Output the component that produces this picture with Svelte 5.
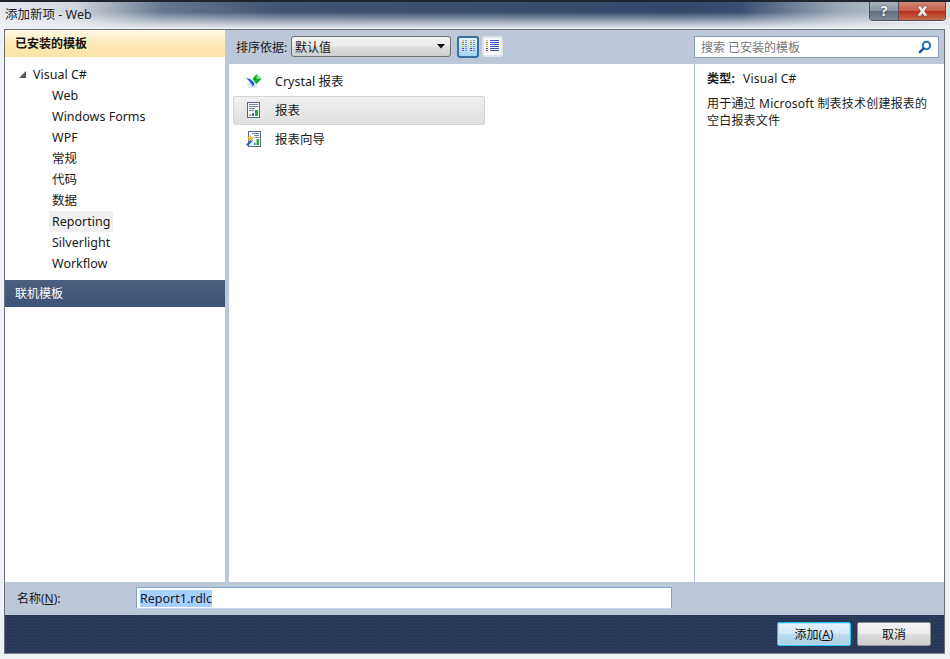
<script lang="ts">
  const groups = ["Web", "Windows Forms", "WPF", "常规", "代码", "数据", "Reporting", "Silverlight", "Workflow"];
  const templates = [
    { name: "Crystal 报表", icon: "crystal", selected: false },
    { name: "报表", icon: "report", selected: true },
    { name: "报表向导", icon: "wizard", selected: false }
  ];
  const dots = ["#d8c040", "#e04030", "#50b050", "#e8b020", "#3050c0", "#e04030"];
</script>

<div class="window">
  <div class="titlebar">
    <span class="title">添加新项 - Web</span>
    <div class="caption">
      <div class="cap-help">?</div>
      <div class="cap-close">
        <svg width="17" height="12" viewBox="0 0 17 12">
          <path d="M3 1h4l1.500 2.500L10 1h4l-3.500 5 3.500 5h-4L8.500 8.500 7 11H3l3.500-5z" fill="#f4f0ee" stroke="#7d3a30" stroke-width=".6" />
        </svg>
      </div>
    </div>
  </div>

  <div class="frame">
    <div class="panes">
      <aside class="left">
        <div class="installed">已安装的模板</div>
        <div class="tree">
          <div class="root">
            <svg width="9" height="9" viewBox="0 0 9 9"><path d="M8 1v7H1z" fill="#555" /></svg>
            <span>Visual C#</span>
          </div>
          {#each groups as g}
            <div class="node"><span class:current={g === "Reporting"}>{g}</span></div>
          {/each}
        </div>
        <div class="online">联机模板</div>
      </aside>

      <main class="center">
        <div class="toolbar">
          <span class="sort-label">排序依据:</span>
          <div class="select">
            <span>默认值</span>
            <svg width="8" height="5" viewBox="0 0 8 5"><path d="M0 0h8L4 4.500z" fill="#111" /></svg>
          </div>
          <div class="view-btn active">
            <svg width="15" height="15" viewBox="0 0 15 15">
              {#each dots as c, i}
                <rect x="1" y={1 + i * 2} width="2" height="1" fill={c} />
                <rect x="4" y={1 + i * 2} width="2" height="1" fill="#7c8ed8" />
                <rect x="9" y={1 + i * 2} width="2" height="1" fill={c} />
                <rect x="12" y={1 + i * 2} width="2" height="1" fill="#7c8ed8" />
              {/each}
            </svg>
          </div>
          <div class="view-btn">
            <svg width="15" height="15" viewBox="0 0 15 15">
              {#each dots as c, i}
                <rect x="1" y={1 + i * 2} width="2" height="1" fill={c} />
                <rect x="5" y={1 + i * 2} width="9" height="1" fill="#3f50c0" />
              {/each}
            </svg>
          </div>
        </div>
        <div class="list">
          {#each templates as t}
            <div class="item" class:selected={t.selected}>
              <span class="item-icon">
                {#if t.icon === "crystal"}
                  <svg width="16" height="16" viewBox="0 0 16 16">
                    <path d="M1 9l6 1.500L11 9v6H2z" fill="#dfe8f4" />
                    <path d="M0 5c3 .2 6 1.800 8.500 5L7 14C5.500 10.500 3 7.500 0 5z" fill="#1f5cc4" />
                    <path d="M10.500 1l5 5-5 5-4-5z" fill="#12a83a" />
                    <path d="M10.500 1l5 5h-5z" fill="#6fe07a" />
                  </svg>
                {:else if t.icon === "report"}
                  <svg width="16" height="16" viewBox="0 0 16 16">
                    <rect x="1.500" y=".5" width="12" height="15" fill="#f4f7fb" stroke="#56688a" />
                    <path d="M3 2.500h9M3 4.500h9M3 6.500h6M3 8.500h5" stroke="#7488a8" />
                    <path d="M3 14v-2h2v2z" fill="#f0a020" />
                    <path d="M6 14v-3h2v3z" fill="#2c6fd0" />
                    <path d="M9 14V8h3v6z" fill="#2fa83c" />
                  </svg>
                {:else}
                  <svg width="16" height="16" viewBox="0 0 16 16">
                    <rect x="2.500" y=".5" width="12" height="15" fill="#f4f7fb" stroke="#56688a" />
                    <path d="M6 2.500h7M8 4.500h5M9 6.500h4" stroke="#7488a8" />
                    <path d="M8 14v-2h1.500v2z" fill="#2c6fd0" />
                    <path d="M10.500 14V8h2.500v6z" fill="#2fa83c" />
                    <path d="M0 14l5-6 2 1.500L2 15z" fill="#2b62c4" />
                    <path d="M4 4l1.200 2L8 6.500 6 8l.4 2.500L4 9 2 10l.6-2.500L1 6l2-.2z" fill="#f2bc20" />
                  </svg>
                {/if}
              </span>
              <span>{t.name}</span>
            </div>
          {/each}
        </div>
      </main>

      <section class="right">
        <div class="search-wrap">
          <div class="search">
            <span>搜索 已安装的模板</span>
            <svg width="14" height="14" viewBox="0 0 14 14">
              <circle cx="8.500" cy="5.500" r="3.700" fill="none" stroke="#1e72b8" stroke-width="2" />
              <path d="M5.500 8.500L1.800 12.200" stroke="#1c4f94" stroke-width="2.400" stroke-linecap="round" />
            </svg>
          </div>
        </div>
        <div class="details">
          <div class="kind"><b>类型:</b><span>Visual C#</span></div>
          <p>用于通过 Microsoft 制表技术创建报表的<br />空白报表文件</p>
        </div>
      </section>
    </div>

    <div class="name-row">
      <label for="name">名称(<u>N</u>):</label>
      <div class="name-input" id="name"><span>Report1.rdlc</span></div>
    </div>

    <div class="actions">
      <button class="primary">添加(<u>A</u>)</button>
      <button>取消</button>
    </div>
  </div>
</div>

<style>
  :global(body) {
    margin: 0;
  }

  .window {
    width: 950px;
    height: 659px;
    box-sizing: border-box;
    overflow: hidden;
    padding: 0 5px 5px 4px;
    display: flex;
    flex-direction: column;
    font-family: "Noto Sans", "Noto Sans CJK SC", sans-serif;
    font-size: 12.5px;
    color: #1a1a1a;
    border-top: 2px solid #20242c;
    background:
      linear-gradient(180deg, rgba(240, 243, 247, 0) 0, rgba(240, 243, 247, 0) 10px, #eef1f5 27px),
      linear-gradient(90deg, #e8eaee 0, #d0d5dc 8%, #66788f 17%, #40536f 30%, #34496a 72%, #3a4f70 78%, #9aa6b4 88%, #d8dde4 100%);
  }

  .titlebar {
    height: 27px;
    flex: none;
    display: flex;
    justify-content: space-between;
    align-items: flex-start;
  }

  .title {
    margin: 4px 0 0 1px;
    font-size: 12.5px;
    line-height: 18px;
    color: #1f1f28;
  }

  .caption {
    display: flex;
    margin-right: -1px;
    height: 18px;
    border: 1px solid #4a4f58;
    border-top: none;
    border-radius: 0 0 4px 4px;
    overflow: hidden;
    box-shadow: 0 1px 0 rgba(255, 255, 255, .6);
  }

  .cap-help {
    width: 28px;
    text-align: center;
    font-weight: 700;
    font-size: 14px;
    line-height: 17px;
    color: #f2f2f2;
    text-shadow: 0 0 2px #333;
    border-right: 1px solid #555;
    background: linear-gradient(180deg, #a7b1bc 0, #8a96a4 48%, #626f80 52%, #7c8894 100%);
  }

  .cap-close {
    width: 46px;
    display: flex;
    align-items: center;
    justify-content: center;
    background: linear-gradient(180deg, #d08a78 0, #c85f48 48%, #b8301a 52%, #c86a50 100%);
  }

  .frame {
    flex: 1;
    min-height: 0;
    display: flex;
    flex-direction: column;
    border: 1px solid #6b7077;
    border-bottom-color: #7f838a;
    background: #bcc7d8;
  }

  .panes {
    flex: 1;
    min-height: 0;
    display: flex;
  }

  .left {
    width: 220px;
    flex: none;
    display: flex;
    flex-direction: column;
    background: #fff;
  }

  .installed {
    height: 27px;
    line-height: 27px;
    padding-left: 10px;
    font-weight: 700;
    font-size: 12px;
    color: #111;
    background: linear-gradient(180deg, #fff9e6 0, #fde8b4 55%, #fce4a8 100%);
  }

  .tree {
    padding-top: 7px;
    padding-bottom: 6px;
    line-height: 21px;
  }

  .root {
    display: flex;
    align-items: center;
    gap: 6px;
    padding-left: 13px;
    height: 21px;
  }

  .node {
    height: 21px;
    padding-left: 44px;
  }

  .node span {
    display: inline-block;
    padding: 0 3px;
  }

  .current {
    background: #f0f0f0;
  }

  .online {
    height: 27px;
    line-height: 27px;
    padding-left: 10px;
    font-size: 12px;
    color: #fff;
    background: linear-gradient(180deg, #4d5f80 0, #3d5278 100%);
  }

  .center {
    flex: none;
    width: 469px;
    display: flex;
    flex-direction: column;
  }

  .toolbar {
    height: 34px;
    flex: none;
    display: flex;
    align-items: center;
    padding-left: 11px;
    box-sizing: border-box;
    padding-bottom: 1px;
    margin-right: -1px;
  }

  .sort-label {
    font-size: 12px;
    width: 55px;
    flex: none;
  }

  .select {
    width: 160px;
    height: 21px;
    box-sizing: border-box;
    display: flex;
    align-items: center;
    justify-content: space-between;
    padding: 0 5px 0 3px;
    font-size: 12px;
    border: 1px solid #707070;
    border-radius: 3px;
    background: linear-gradient(180deg, #f2f2f2 0, #ebebeb 48%, #dddddd 52%, #cfcfcf 100%);
  }

  .view-btn {
    width: 21px;
    height: 21px;
    box-sizing: border-box;
    margin-left: 6px;
    display: flex;
    align-items: center;
    justify-content: center;
    border: 2px solid #dfe4ec;
    border-radius: 3px;
    background: #f8fafc;
  }

  .view-btn + .view-btn {
    margin-left: 3px;
  }

  .view-btn.active {
    width: 22px;
    height: 22px;
    border-color: #38709c;
    background: linear-gradient(180deg, #e8f4fc 0, #a0d4f2 100%);
  }

  .list {
    flex: 1;
    background: #fff;
    margin-left: 4px;
    padding-top: 3px;
  }

  .item {
    height: 29px;
    width: 252px;
    box-sizing: border-box;
    margin-left: 4px;
    display: flex;
    align-items: center;
    padding: 0 0 2px 12px;
    gap: 13px;
    border: 1px solid transparent;
    border-radius: 2px;
  }

  .item-icon {
    width: 16px;
    height: 16px;
    display: flex;
    flex: none;
  }

  .item.selected {
    border-color: #d4d4d4;
    background: linear-gradient(180deg, #f0f0f0 0, #e0e0e0 100%);
  }

  .right {
    flex: 1;
    display: flex;
    flex-direction: column;
  }

  .search-wrap {
    height: 34px;
    flex: none;
    padding-right: 5px;
    padding-left: 0;
    box-sizing: border-box;
    padding-top: 6px;
  }

  .search {
    height: 22px;
    box-sizing: border-box;
    display: flex;
    align-items: center;
    justify-content: space-between;
    padding: 0 6px;
    background: #fff;
    border: 1px solid #8a9bb4;
    color: #777;
    font-size: 12px;
  }

  .details {
    flex: 1;
    background: #fff;
    border-left: 1px solid #b4c4d8;
    padding: 5px 12px;
    font-size: 12px;
    letter-spacing: .2px;
  }

  .kind {
    display: flex;
    gap: 8px;
    line-height: 20px;
  }

  .details p {
    margin: 6px 0 0;
    line-height: 17px;
  }

  .name-row {
    height: 33px;
    flex: none;
    box-sizing: border-box;
    display: flex;
    align-items: center;
    padding: 0 0 1px 12px;
    font-size: 12px;
  }

  .name-row label {
    width: 119px;
    flex: none;
  }

  .name-input {
    width: 536px;
    height: 22px;
    box-sizing: border-box;
    display: flex;
    align-items: center;
    padding: 0 3px;
    background: #fff;
    border: 1px solid #7da2ce;
    border-bottom-color: #c4d8ec;
    font-size: 12.5px;
  }

  .name-input span {
    background: #a6d0ff;
    line-height: 17px;
  }

  .actions {
    height: 38px;
    flex: none;
    display: flex;
    justify-content: flex-end;
    align-items: center;
    gap: 6px;
    padding: 0 13px 0 0;
    background-color: #283856;
    background-image: radial-gradient(#32446a 1px, transparent 1px);
    background-size: 3px 3px;
  }

  button {
    width: 74px;
    height: 24px;
    padding: 0;
    font: inherit;
    font-size: 12px;
    color: #111;
    border: 1px solid #8f8f8f;
    border-radius: 2px;
    background: linear-gradient(180deg, #f4f4f4 0, #ebebeb 48%, #dcdcdc 52%, #cfcfcf 100%);
  }

  button.primary {
    border-color: #1ec0f0;
    box-shadow: inset 0 0 0 1px #b8e0f4;
    background: linear-gradient(180deg, #e8f2fa 0, #d4e8f6 48%, #bcdcf0 52%, #a8d0e8 100%);
  }
</style>
